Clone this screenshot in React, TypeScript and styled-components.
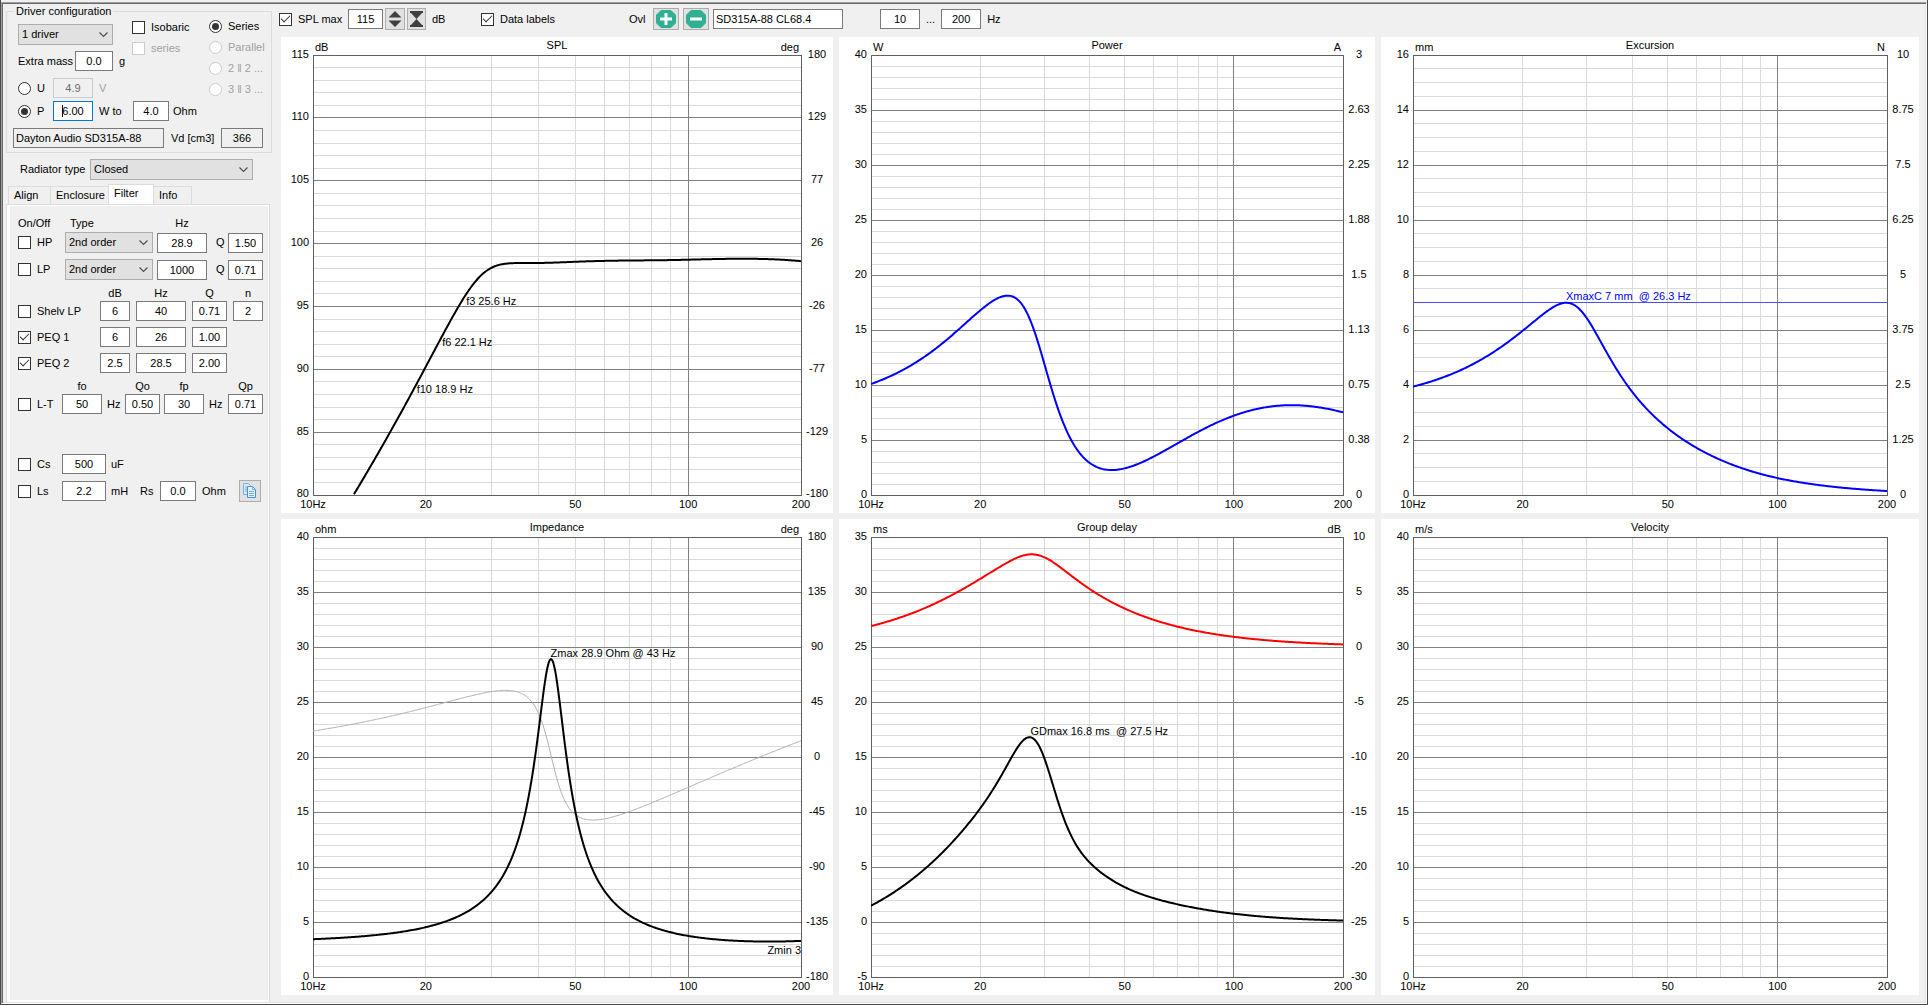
import React, { useId } from "react";
import styled, { createGlobalStyle, css } from "styled-components";

const FONT = '"Liberation Sans", Arial, sans-serif';
const FACE = "#f0f0f0";
const LINE = "#dcdcdc";
const EDGE = "#7a7a7a";

const GlobalStyle = createGlobalStyle`
  *, *::before, *::after { box-sizing: border-box; }
  body {
    margin: 0;
    background: ${FACE};
    color: #000;
    font: 11px/15px ${FONT};
  }
  input, select, button { font: inherit; color: inherit; margin: 0; }
`;

/* ---------- window ---------- */

const Window = styled.div`
  display: flex;
  min-height: 100vh;
  padding-top: 2px;
  border: solid #4a4a4a;
  border-width: 0 1px 1px;
`;

const Frame = styled.main`
  flex: 1;
  display: flex;
  min-width: 0;
  border: 1px solid #a0a0a0;
  border-right-color: #fff;
  border-bottom-color: #fff;
  box-shadow: inset 1px 1px 0 #696969, inset -1px -1px 0 #e3e3e3;
`;

const Sidebar = styled.aside`
  display: flex;
  flex-direction: column;
  flex: none;
  width: 268px;
  padding: 1px 0 1px 4px;
`;

const Workspace = styled.section`
  flex: 1;
  display: flex;
  flex-direction: column;
  min-width: 0;
  padding: 1px 7px 8px 9px;
`;

/* ---------- controls ---------- */

const markBase = css`
  appearance: none;
  flex: none;
  display: grid;
  place-items: center;
  width: 13px;
  height: 13px;
  background: #fff;
  border: 1px solid #333;
  &:disabled { border-color: #ccc; }
`;

const CheckInput = styled.input`
  ${markBase}
  &:checked::after {
    content: "";
    width: 9px;
    height: 5px;
    margin-top: -3px;
    border: solid #333;
    border-width: 0 0 1px 1px;
    transform: rotate(-45deg);
  }
`;

const RadioInput = styled.input`
  ${markBase}
  border-radius: 50%;
  &:checked::after {
    content: "";
    width: 7px;
    height: 7px;
    border-radius: 50%;
    background: #333;
  }
`;

const Option = styled.label<{ $off?: boolean }>`
  display: flex;
  align-items: center;
  gap: 6px;
  height: 15px;
  white-space: nowrap;
  color: ${(p) => (p.$off ? "#a0a0a0" : "inherit")};
`;

const Field = styled.input<{ $w: number; $left?: boolean; $plain?: boolean }>`
  width: ${(p) => p.$w}px;
  height: 20px;
  padding: 0 2px;
  text-align: ${(p) => (p.$left ? "left" : "center")};
  background: ${(p) => (p.$plain ? FACE : "#fff")};
  border: 1px solid ${EDGE};
  outline: none;
  &:disabled { background: ${FACE}; border-color: #ccc; color: #6d6d6d; }
  &[data-active] { border-color: #0078d7; }
`;

const CaretBox = styled.span`
  position: relative;
  display: flex;
`;

const Caret = styled.span`
  position: absolute;
  left: 9px;
  top: 4px;
  width: 1px;
  height: 12px;
  background: #000;
`;

const SelectBox = styled.span<{ $w: number }>`
  position: relative;
  display: flex;
  width: ${(p) => p.$w}px;
  svg { position: absolute; right: 4px; top: 6px; pointer-events: none; }
`;

const SelectInput = styled.select`
  appearance: none;
  width: 100%;
  height: 21px;
  padding: 0 3px;
  background: #e1e1e1;
  border: 1px solid #adadad;
  border-radius: 0;
  outline: none;
`;

const ToolButton = styled.button<{ $w: number }>`
  display: grid;
  place-items: center;
  width: ${(p) => p.$w}px;
  height: 22px;
  padding: 0;
  background: #e1e1e1;
  border: 1px solid #adadad;
`;

function Check({ label, ...rest }: { label: string; defaultChecked?: boolean; disabled?: boolean }) {
  return (
    <Option $off={rest.disabled}>
      <CheckInput type="checkbox" {...rest} />
      {label}
    </Option>
  );
}

function Radio({ label, ...rest }: { label: string; name: string; defaultChecked?: boolean; disabled?: boolean }) {
  return (
    <Option $off={rest.disabled}>
      <RadioInput type="radio" {...rest} />
      {label}
    </Option>
  );
}

function Num({ w, v, name, ...rest }: { w: number; v: string; name: string; disabled?: boolean }) {
  return <Field $w={w} type="text" defaultValue={v} aria-label={name} {...rest} />;
}

function Select({ w, v, id, name }: { w: number; v: string; id?: string; name?: string }) {
  return (
    <SelectBox $w={w}>
      <SelectInput id={id} aria-label={name} defaultValue={v}>
        <option>{v}</option>
      </SelectInput>
      <svg width="11" height="9" viewBox="0 0 11 9" aria-hidden="true">
        <path d="M1.5 2.5 5.5 6.5 9.5 2.5" fill="none" stroke="#505050" strokeWidth="1.2" />
      </svg>
    </SelectBox>
  );
}

/* ---------- driver configuration ---------- */

const DriverBox = styled.fieldset`
  display: grid;
  grid-template-columns: 1fr 62px;
  margin: 0 0 6px;
  padding: 0 0 4px;
  width: 266px;
  border: 1px solid ${LINE};
`;

const Legend = styled.legend`
  margin-left: 7px;
  padding: 0 2px;
`;

const DriverLeft = styled.div`
  display: flex;
  flex-direction: column;
  gap: 3px;
  padding: 1px 0 0 11px;
`;

const Columns = styled.div<{ $cols: string; $h?: number }>`
  display: grid;
  grid-template-columns: ${(p) => p.$cols};
  align-items: center;
  height: ${(p) => p.$h ?? 20}px;
  white-space: nowrap;
`;

const OptionStack = styled.div`
  display: flex;
  flex-direction: column;
  gap: 6px;
`;

const DriverTop = styled.div`
  display: grid;
  grid-template-columns: 114px 1fr;
  margin-bottom: 4px;
`;

const DriverForm = styled.div`
  display: flex;
  flex-direction: column;
  gap: 6px;
  padding-top: 4px;
`;

const DriverName = styled.div`
  grid-column: 1 / -1;
  display: grid;
  grid-template-columns: 158px 50px 42px;
  align-items: center;
  padding: 7px 0 0 6px;
  white-space: nowrap;
`;

const Muted = styled.span`
  color: #a0a0a0;
`;

function DriverConfiguration() {
  const nameId = useId();
  return (
    <DriverBox>
      <Legend>Driver configuration</Legend>
      <DriverLeft>
        <DriverTop>
          <DriverForm>
            <Select w={95} v="1 driver" name="Drivers" />
            <Columns $cols="57px 44px 1fr">
              <span>Extra mass</span>
              <Num w={38} v="0.0" name="Extra mass" />
              <span>g</span>
            </Columns>
          </DriverForm>
          <OptionStack>
            <Check label="Isobaric" />
            <Check label="series" disabled />
          </OptionStack>
        </DriverTop>
        <Columns $cols="35px 46px 1fr">
          <Radio name="drive" label="U" />
          <Num w={40} v="4.9" name="Voltage" disabled />
          <Muted>V</Muted>
        </Columns>
        <Columns $cols="35px 46px 34px 40px 1fr">
          <Radio name="drive" label="P" defaultChecked />
          <CaretBox>
            <Field $w={40} type="text" defaultValue="6.00" aria-label="Power" data-active />
            <Caret />
          </CaretBox>
          <span>W to</span>
          <Num w={36} v="4.0" name="Load" />
          <span>Ohm</span>
        </Columns>
      </DriverLeft>
      <OptionStack>
        <Radio name="wiring" label="Series" defaultChecked />
        <Radio name="wiring" label="Parallel" disabled />
        <Radio name="wiring" label="2 ‖ 2 ..." disabled />
        <Radio name="wiring" label="3 ‖ 3 ..." disabled />
      </OptionStack>
      <DriverName>
        <Field $w={151} $left $plain type="text" readOnly value="Dayton Audio SD315A-88" aria-label="Driver" />
        <label htmlFor={nameId}>Vd [cm3]</label>
        <Field id={nameId} $w={42} $plain type="text" readOnly value="366" />
      </DriverName>
    </DriverBox>
  );
}

/* ---------- tabs ---------- */

const RadiatorRow = styled.div`
  display: grid;
  grid-template-columns: 70px 1fr;
  align-items: center;
  padding-left: 14px;
  white-space: nowrap;
`;

const TabBar = styled.div`
  display: flex;
  align-items: flex-end;
  margin-top: 4px;
  padding-left: 2px;
`;

const Tab = styled.button<{ $w: number; $on?: boolean }>`
  width: ${(p) => p.$w}px;
  height: ${(p) => (p.$on ? 21 : 18)}px;
  margin-bottom: ${(p) => (p.$on ? -1 : 0)}px;
  padding: 0 0 ${(p) => (p.$on ? 3 : 0)}px 5px;
  text-align: left;
  background: ${(p) => (p.$on ? "#fff" : FACE)};
  border: 1px solid ${LINE};
  border-bottom: 0;
  & + & { margin-left: -1px; }
`;

const TabPanel = styled.div`
  flex: 1;
  width: 264px;
  border: 1px solid ${LINE};
  border-bottom: 0;
  background: #fff;
  padding: 1px 1px 2px 3px;
  display: flex;
`;

const TabBody = styled.div`
  flex: 1;
  background: ${FACE};
  padding: 9px 0 0 8px;
`;

const Rows = styled.div<{ $gap: number; $after?: number }>`
  display: flex;
  flex-direction: column;
  gap: ${(p) => p.$gap}px;
  margin-bottom: ${(p) => p.$after ?? 0}px;
`;

const Head = styled.span<{ $w: number }>`
  width: ${(p) => p.$w}px;
  text-align: center;
`;

const PASS = "47px 92px 59px 12px 35px";
const EQ = "82px 36px 56px 41px 30px";
const LT = "44px 45px 18px 39px 45px 19px 35px";
const LC = "44px 49px 29px 20px 42px 37px 22px";

const passRows = [
  { label: "HP", hz: "28.9", q: "1.50" },
  { label: "LP", hz: "1000", q: "0.71" },
];

const eqRows = [
  { label: "Shelv LP", on: false, db: "6", hz: "40", q: "0.71", n: "2" },
  { label: "PEQ 1", on: true, db: "6", hz: "26", q: "1.00", n: "" },
  { label: "PEQ 2", on: true, db: "2.5", hz: "28.5", q: "2.00", n: "" },
];

function FilterTab() {
  return (
    <TabBody>
      <Columns $cols={PASS} $h={17}>
        <span>On/Off</span>
        <Columns $cols="5px 1fr" $h={15}>
          <span />
          <span>Type</span>
        </Columns>
        <Head $w={50}>Hz</Head>
      </Columns>
      <Rows $gap={7} $after={6}>
        {passRows.map((r) => (
          <Columns key={r.label} $cols={PASS}>
            <Check label={r.label} />
            <Select w={88} v="2nd order" name={`${r.label} order`} />
            <Num w={50} v={r.hz} name={`${r.label} frequency`} />
            <span>Q</span>
            <Num w={35} v={r.q} name={`${r.label} Q`} />
          </Columns>
        ))}
      </Rows>
      <Columns $cols={EQ} $h={16}>
        <span />
        <Head $w={30}>dB</Head>
        <Head $w={50}>Hz</Head>
        <Head $w={35}>Q</Head>
        <Head $w={30}>n</Head>
      </Columns>
      <Rows $gap={6} $after={5}>
        {eqRows.map((r) => (
          <Columns key={r.label} $cols={EQ}>
            <Check label={r.label} defaultChecked={r.on} />
            <Num w={30} v={r.db} name={`${r.label} gain`} />
            <Num w={50} v={r.hz} name={`${r.label} frequency`} />
            <Num w={35} v={r.q} name={`${r.label} Q`} />
            {r.n && <Num w={30} v={r.n} name={`${r.label} n`} />}
          </Columns>
        ))}
      </Rows>
      <Columns $cols={LT} $h={16}>
        <span />
        <Head $w={40}>fo</Head>
        <span />
        <Head $w={35}>Qo</Head>
        <Head $w={40}>fp</Head>
        <span />
        <Head $w={35}>Qp</Head>
      </Columns>
      <Rows $gap={0} $after={40}>
        <Columns $cols={LT}>
          <Check label="L-T" />
          <Num w={40} v="50" name="fo" />
          <span>Hz</span>
          <Num w={35} v="0.50" name="Qo" />
          <Num w={40} v="30" name="fp" />
          <span>Hz</span>
          <Num w={35} v="0.71" name="Qp" />
        </Columns>
      </Rows>
      <Rows $gap={6}>
        <Columns $cols={LC}>
          <Check label="Cs" />
          <Num w={44} v="500" name="Cs" />
          <span>uF</span>
        </Columns>
        <Columns $cols={LC}>
          <Check label="Ls" />
          <Num w={44} v="2.2" name="Ls" />
          <span>mH</span>
          <span>Rs</span>
          <Num w={36} v="0.0" name="Rs" />
          <span>Ohm</span>
          <ToolButton $w={22} type="button" aria-label="Copy">
            <svg width="14" height="16" viewBox="0 0 14 16" aria-hidden="true">
              <path d="M.5.5h5l2 2v9h-7z" fill="#d6eafc" stroke="#7ab0ea" />
              <path d="M2 4h3M2 6h3M2 8h3" stroke="#7ab0ea" />
              <path d="M4.500 3.500h5l3 3v8h-8z" fill="#e4f2ff" stroke="#4a90e0" />
              <path d="M9.500 3.500v3h3M6 8.500h5M6 10.500h5M6 12.500h5" fill="none" stroke="#7ab0ea" />
            </svg>
          </ToolButton>
        </Columns>
      </Rows>
    </TabBody>
  );
}

/* ---------- toolbar ---------- */

const Toolbar = styled.header`
  display: grid;
  grid-template-columns: 202px 148px 251px auto;
  height: 30px;
  margin-bottom: 3px;
  align-items: center;
  white-space: nowrap;
`;

const Group = styled.div<{ $gap: number }>`
  display: flex;
  align-items: center;
  gap: ${(p) => p.$gap}px;
  height: 22px;
`;

const LabelCell = styled.div<{ $w: number }>`
  width: ${(p) => p.$w}px;
`;

function OverlayIcon({ minus }: { minus?: boolean }) {
  return (
    <svg width="22" height="18" viewBox="0 0 22 18" aria-hidden="true">
      <path d="M6 .5h10l4.500 4.500v8L16 17.500H6L1.500 13V5z" fill="#2fb092" stroke="#2fb092" strokeLinejoin="round" />
      <path d={minus ? "M5 9h12" : "M5 9h12M11 3v12"} stroke="#fff" strokeWidth="3" />
    </svg>
  );
}

function TopBar() {
  return (
    <Toolbar>
      <Group $gap={2}>
        <LabelCell $w={67}>
          <Check label="SPL max" defaultChecked />
        </LabelCell>
        <Num w={35} v="115" name="SPL max value" />
        <ToolButton $w={20} type="button" aria-label="Shift range">
          <svg width="14" height="18" viewBox="0 0 14 18" aria-hidden="true">
            <path d="M7 1 13.500 7.500H.5zM7 17 .5 10.500h13z" fill="#404040" />
          </svg>
        </ToolButton>
        <ToolButton $w={19} type="button" aria-label="Fit range">
          <svg width="13" height="16" viewBox="0 0 13 16" aria-hidden="true">
            <path d="M0 0h13v2H0zM0 14h13v2H0zM1 2h11L6.500 8zM1 14h11L6.500 8z" fill="#404040" />
          </svg>
        </ToolButton>
        <Columns $cols="4px auto">
          <span />
          <span>dB</span>
        </Columns>
      </Group>
      <Check label="Data labels" defaultChecked />
      <Group $gap={4}>
        <LabelCell $w={20}>Ovl</LabelCell>
        <ToolButton $w={26} type="button" aria-label="Add overlay">
          <OverlayIcon />
        </ToolButton>
        <ToolButton $w={26} type="button" aria-label="Remove overlay">
          <OverlayIcon minus />
        </ToolButton>
        <Field $w={130} $left type="text" defaultValue="SD315A-88 CL68.4" aria-label="Overlay name" />
      </Group>
      <Group $gap={6}>
        <Num w={40} v="10" name="From" />
        <span>...</span>
        <Num w={40} v="200" name="To" />
        <span>Hz</span>
      </Group>
    </Toolbar>
  );
}

/* ---------- driver model ---------- */

type Pt = [number, number];
type Fn = (u: number) => number;

const freq: Fn = (u) => 10 * Math.pow(20, u / 1000);
const xPos = (f: number) => Math.log(f / 10) / Math.log(20);

const F0 = 43.15;
const QM = 5.45;
const RE = 3.15;
const RES = 25.75;
const LE = 0.00145;
const V2 = 24;

const peqs = [
  { db: 6, f: 26, q: 1 },
  { db: 2.5, f: 28.5, q: 2 },
];

/* Filter gain (linear) and phase of both parametric stages. */
function filter(f: number) {
  let gain = 1;
  let phase = 0;
  for (const p of peqs) {
    const x = f / p.f;
    const re = 1 - x * x;
    const den = x / p.q;
    const num = den * Math.pow(10, p.db / 20);
    gain *= Math.hypot(re, num) / Math.hypot(re, den);
    phase += Math.atan2(num, re) - Math.atan2(den, re);
  }
  return { gain, phase };
}

function impedance(f: number) {
  const k = QM * (f / F0 - F0 / f);
  const m = RES / (1 + k * k);
  const re = RE + m;
  const im = 2 * Math.PI * f * LE - m * k;
  return { re, mag: Math.hypot(re, im), phase: Math.atan2(im, re) };
}

function motion(f: number) {
  const x = f / F0;
  const re = 1 - x * x;
  const im = x / QM;
  const g = filter(f);
  const z = impedance(f);
  return {
    mag: g.gain / z.mag / Math.hypot(re, im),
    phase: g.phase - z.phase - Math.atan2(im, re),
  };
}

/* Natural cubic spline through the given points. */
function spline(p: Pt[]): Fn {
  const n = p.length - 1;
  const h = p.slice(1).map((q, i) => q[0] - p[i][0]);
  const c = new Array(n + 1).fill(0);
  const mu = new Array(n + 1).fill(0);
  const z = new Array(n + 1).fill(0);
  for (let i = 1; i < n; i++) {
    const a = (3 * (p[i + 1][1] - p[i][1])) / h[i] - (3 * (p[i][1] - p[i - 1][1])) / h[i - 1];
    const l = 2 * (p[i + 1][0] - p[i - 1][0]) - h[i - 1] * mu[i - 1];
    mu[i] = h[i] / l;
    z[i] = (a - h[i - 1] * z[i - 1]) / l;
  }
  for (let i = n - 1; i >= 0; i--) c[i] = z[i] - mu[i] * c[i + 1];
  return (u) => {
    let i = 0;
    while (i < n - 1 && u > p[i + 1][0]) i++;
    const t = u - p[i][0];
    const b = (p[i + 1][1] - p[i][1]) / h[i] - (h[i] * (c[i + 1] + 2 * c[i])) / 3;
    const d = (c[i + 1] - c[i]) / (3 * h[i]);
    return p[i][1] + t * (b + t * (c[i] + t * d));
  };
}

/* Model curve calibrated so that it runs through the known readings. */
function calibrate(base: Fn, known: Pt[]): Fn {
  const diff = spline(known.map(([u, v]): Pt => [u, v - base(u)]));
  return (u) => base(u) + diff(u);
}

const excursionLog = calibrate(
  (u) => Math.log(motion(freq(u)).mag),
  ([[0, 3.94], [229, 5.94], [324, 6.99], [414, 5.02], [535, 2.46], [647, 1.29], [768, 0.62], [1000, 0.145]] as Pt[]).map(
    ([u, v]): Pt => [u, Math.log(v)]
  )
);

const spl = calibrate(
  (u) => 20 * Math.log10(motion(freq(u)).mag * freq(u) ** 2),
  [[83, 80], [229, 90.05], [316, 96.1], [400, 98.42], [536, 98.55], [722, 98.68], [1000, 98.6]]
);

const groupDelay = calibrate(
  (u) => {
    const f = freq(u);
    const df = f * 0.001;
    return (-1000 * (motion(f + df).phase - motion(f - df).phase)) / (4 * Math.PI * df);
  },
  [[0, 1.48], [116, 4.9], [230, 10.25], [299, 15.06], [336, 16.8], [368, 14.8], [404, 9.95], [462, 5.47], [536, 3.2], [648, 1.62], [767, 0.76], [1000, 0.13]]
);

const power: Fn = (u) => {
  const z = impedance(freq(u));
  return (V2 * filter(freq(u)).gain ** 2 * z.re) / z.mag ** 2;
};

/* ---------- charts ---------- */

type Curve = { color: string; width: number; fn: Fn; from?: number };
type Note = { f: number; v: number; text: string; color?: string; end?: boolean };
type ChartSpec = {
  title: string;
  left: string;
  right: string;
  min: number;
  max: number;
  minor: number;
  lTicks: string[];
  rTicks: string[];
  curves: Curve[];
  notes: Note[];
  limit?: number;
};

function trace(c: Curve, min: number, max: number) {
  const from = c.from ?? 0;
  const steps = 400;
  const pts = Array.from({ length: steps + 1 }, (_, i) => {
    const u = from + ((1000 - from) * i) / steps;
    return `${u.toFixed(2)} ${((1000 * (max - c.fn(u))) / (max - min)).toFixed(2)}`;
  });
  return `M${pts.join("L")}`;
}

const ChartGrid = styled.div`
  flex: 1;
  display: grid;
  grid-template-columns: minmax(0, 276fr) minmax(0, 268fr) minmax(0, 269fr);
  grid-template-rows: 1fr 1fr;
  gap: 6px;
  margin-left: 2px;
`;

const Panel = styled.figure`
  display: grid;
  grid-template-columns: 32px minmax(0, 1fr) 32px;
  grid-template-rows: 18px minmax(300px, 1fr) 18px;
  margin: 0;
  background: #fff;
`;

const PanelHead = styled.figcaption`
  grid-column: 2;
  display: grid;
  grid-template-columns: 1fr auto 1fr;
  padding: 1px 2px 0;
`;

const Unit = styled.span<{ $end?: boolean }>`
  align-self: end;
  justify-self: ${(p) => (p.$end ? "end" : "start")};
`;

const YAxis = styled.div<{ $side: "left" | "right" }>`
  grid-row: 2;
  grid-column: ${(p) => (p.$side === "left" ? 1 : 3)};
  display: flex;
  flex-direction: column;
  justify-content: space-between;
  margin-top: -1px;
  margin-bottom: 1px;
  padding-right: ${(p) => (p.$side === "left" ? 4 : 0)}px;
  align-items: ${(p) => (p.$side === "left" ? "flex-end" : "center")};
`;

const YTick = styled.span`
  display: flex;
  align-items: center;
  height: 0;
`;

const XAxis = styled.div`
  grid-row: 3;
  grid-column: 2;
  display: flex;
  padding-top: 2px;
`;

const XTick = styled.span`
  display: flex;
  justify-content: center;
  width: 0;
`;

const XGap = styled.span<{ $grow: number }>`
  flex: ${(p) => p.$grow} 0 0;
`;

const PlotArea = styled.div`
  grid-row: 2;
  grid-column: 2;
  position: relative;
`;

const Drawing = styled.svg`
  position: absolute;
  inset: 0;
  width: 100%;
  height: 100%;
  overflow: visible;
`;

const DataLabel = styled.span<{ $color?: string; $end?: boolean }>`
  position: absolute;
  white-space: pre;
  color: ${(p) => p.$color ?? "#000"};
  transform: translate(${(p) => (p.$end ? "-100%" : "0")}, -50%);
`;

const xTicks = [10, 20, 50, 100, 200];

function Chart({ s }: { s: ChartSpec }) {
  const majors = s.lTicks.length - 1;
  const rows = majors * s.minor;
  const pct = (v: number) => `${(100 * (s.max - v)) / (s.max - s.min)}%`;
  return (
    <Panel>
      <PanelHead>
        <Unit>{s.left}</Unit>
        <span>{s.title}</span>
        <Unit $end>{s.right}</Unit>
      </PanelHead>
      <YAxis $side="left">
        {s.lTicks.map((t) => (
          <YTick key={t}>{t}</YTick>
        ))}
      </YAxis>
      <PlotArea>
        <Drawing aria-hidden="true">
          <g shapeRendering="crispEdges">
            {Array.from({ length: rows }, (_, i) =>
              i % s.minor ? (
                <line key={i} x1="0" x2="100%" y1={`${(100 * i) / rows}%`} y2={`${(100 * i) / rows}%`} stroke="#dadada" />
              ) : null
            )}
            {[20, 30, 40, 50, 60, 70, 80, 90].map((f) => (
              <line key={f} y1="0" y2="100%" x1={`${100 * xPos(f)}%`} x2={`${100 * xPos(f)}%`} stroke="#dadada" />
            ))}
            {Array.from({ length: majors }, (_, i) => (
              <line key={i} x1="0" x2="100%" y1={`${(100 * i) / majors}%`} y2={`${(100 * i) / majors}%`} stroke="#808080" />
            ))}
            <line y1="0" y2="100%" x1={`${100 * xPos(100)}%`} x2={`${100 * xPos(100)}%`} stroke="#808080" />
            <rect width="100%" height="100%" fill="none" stroke="#606060" />
            {s.limit && <line x1="0" x2="100%" y1={pct(s.limit)} y2={pct(s.limit)} stroke="#5050f0" />}
          </g>
          <svg width="100%" height="100%" viewBox="0 0 1000 1000" preserveAspectRatio="none">
            {s.curves.map((c, i) => (
              <path
                key={i}
                d={trace(c, s.min, s.max)}
                fill="none"
                stroke={c.color}
                strokeWidth={c.width}
                strokeLinejoin="round"
                vectorEffect="non-scaling-stroke"
              />
            ))}
          </svg>
        </Drawing>
        {s.notes.map((n) => (
          <DataLabel key={n.text} $color={n.color} $end={n.end} style={{ left: `${100 * xPos(n.f)}%`, top: pct(n.v) }}>
            {n.text}
          </DataLabel>
        ))}
      </PlotArea>
      <YAxis $side="right">
        {s.rTicks.map((t) => (
          <YTick key={t}>{t}</YTick>
        ))}
      </YAxis>
      <XAxis>
        {xTicks.map((f, i) => (
          <React.Fragment key={f}>
            {i > 0 && <XGap $grow={Math.round(1000 * (xPos(f) - xPos(xTicks[i - 1])))} />}
            <XTick>{i === 0 ? "10Hz" : f}</XTick>
          </React.Fragment>
        ))}
      </XAxis>
    </Panel>
  );
}

const seq = (top: number, step: number, n: number) => Array.from({ length: n }, (_, i) => String(top - step * i));

const charts: ChartSpec[] = [
  {
    title: "SPL", left: "dB", right: "deg", min: 80, max: 115, minor: 5,
    lTicks: seq(115, 5, 8),
    rTicks: ["180", "129", "77", "26", "-26", "-77", "-129", "-180"],
    curves: [{ color: "#000", width: 2, fn: spl, from: 84 }],
    notes: [
      { f: 25.6, v: 95.4, text: "f3 25.6 Hz" },
      { f: 22.1, v: 92.17, text: "f6 22.1 Hz" },
      { f: 18.9, v: 88.4, text: "f10 18.9 Hz" },
    ],
  },
  {
    title: "Power", left: "W", right: "A", min: 0, max: 40, minor: 5,
    lTicks: seq(40, 5, 9),
    rTicks: ["3", "2.63", "2.25", "1.88", "1.5", "1.13", "0.75", "0.38", "0"],
    curves: [{ color: "#0000ff", width: 2, fn: power }],
    notes: [],
  },
  {
    title: "Excursion", left: "mm", right: "N", min: 0, max: 16, minor: 4,
    lTicks: seq(16, 2, 9),
    rTicks: ["10", "8.75", "7.5", "6.25", "5", "3.75", "2.5", "1.25", "0"],
    limit: 7,
    curves: [{ color: "#0000ff", width: 2, fn: (u) => Math.exp(excursionLog(u)) }],
    notes: [{ f: 26.3, v: 7.25, text: "XmaxC 7 mm  @ 26.3 Hz", color: "#0000ff" }],
  },
  {
    title: "Impedance", left: "ohm", right: "deg", min: 0, max: 40, minor: 5,
    lTicks: seq(40, 5, 9),
    rTicks: seq(180, 45, 9),
    curves: [
      { color: "#b0b0b0", width: 1, fn: (u) => 20 + (20 * impedance(freq(u)).phase) / Math.PI },
      { color: "#000", width: 2, fn: (u) => impedance(freq(u)).mag },
    ],
    notes: [
      { f: 43, v: 29.45, text: "Zmax 28.9 Ohm @ 43 Hz" },
      { f: 200, v: 2.48, text: "Zmin 3", end: true },
    ],
  },
  {
    title: "Group delay", left: "ms", right: "dB", min: -5, max: 35, minor: 5,
    lTicks: seq(35, 5, 9),
    rTicks: seq(10, 5, 9),
    curves: [
      { color: "#ff0000", width: 2, fn: (u) => 25 + 20 * Math.log10(filter(freq(u)).gain) },
      { color: "#000", width: 2, fn: groupDelay },
    ],
    notes: [{ f: 27.5, v: 17.4, text: "GDmax 16.8 ms  @ 27.5 Hz" }],
  },
  {
    title: "Velocity", left: "m/s", right: "", min: 0, max: 40, minor: 5,
    lTicks: seq(40, 5, 9),
    rTicks: [],
    curves: [],
    notes: [],
  },
];

export default function App() {
  return (
    <Window>
      <GlobalStyle />
      <Frame>
        <Sidebar>
          <DriverConfiguration />
          <RadiatorRow>
            <label htmlFor="radiator">Radiator type</label>
            <Select w={163} v="Closed" id="radiator" />
          </RadiatorRow>
          <TabBar role="tablist">
            <Tab $w={43} role="tab" type="button">Align</Tab>
            <Tab $w={59} role="tab" type="button">Enclosure</Tab>
            <Tab $w={46} $on role="tab" type="button" aria-selected="true">Filter</Tab>
            <Tab $w={39} role="tab" type="button">Info</Tab>
          </TabBar>
          <TabPanel role="tabpanel">
            <FilterTab />
          </TabPanel>
        </Sidebar>
        <Workspace>
          <TopBar />
          <ChartGrid>
            {charts.map((s) => (
              <Chart key={s.title} s={s} />
            ))}
          </ChartGrid>
        </Workspace>
      </Frame>
    </Window>
  );
}
